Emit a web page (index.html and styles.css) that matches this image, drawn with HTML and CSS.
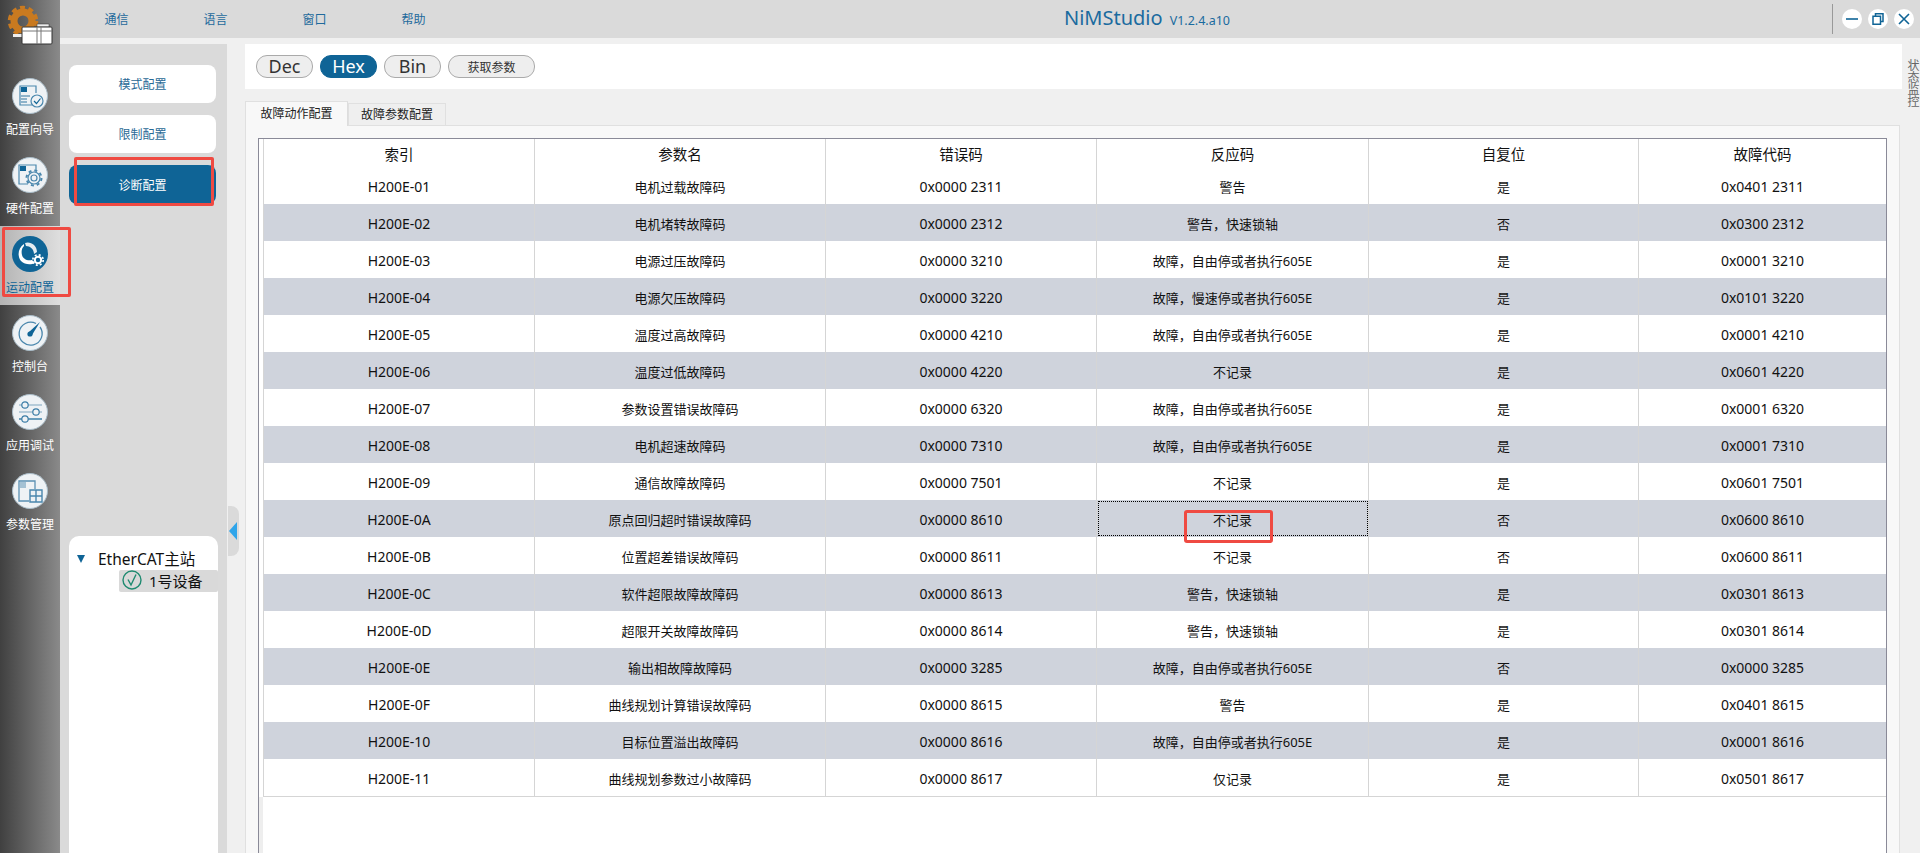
FILE: index.html
```html
<!DOCTYPE html>
<html>
<head>
    <title>NiMStudio</title>
    <link rel="stylesheet" href="styles.css">
</head>
<body>
    <nav class="rail">
        <div class="logo">
            <svg width="60" height="50" viewBox="0 0 60 50">
                <circle cx="23" cy="21" r="9" fill="none" stroke="#c97a20" stroke-width="7"/>
                <circle cx="23" cy="21" r="13.5" fill="none" stroke="#c97a20" stroke-width="3.5" stroke-dasharray="5 3.6"/>
                <rect x="13" y="34" width="9" height="3" fill="#eee"/>
                <rect x="37" y="24" width="12" height="3" fill="#eee" stroke="#333" stroke-width=".5"/>
                <rect x="22" y="27" width="30" height="17" rx="1" fill="#fff" stroke="#333"/>
                <path d="M22 31H52M37 27V44M41 27V44" stroke="#777" fill="none"/>
            </svg>
        </div>
        <a class="rail-item">
            <svg class="rail-icon" viewBox="0 0 36 36">
                <circle cx="18" cy="18" r="17.5" fill="#eef2f5" stroke="#a9bcc8"/>
                <path d="M20 27H8V8H24V15" fill="none" stroke="#4a87ad" stroke-width="1.2"/>
                <rect x="9" y="9" width="6" height="5" fill="#0f6496"/>
                <path d="M9 18H18M9 21H15M9 24H15" stroke="#2f74a0" stroke-width="1.2"/>
                <circle cx="25" cy="23" r="6" fill="#eef2f5" stroke="#4a87ad" stroke-width="1.2"/>
                <path d="M22 23L24.5 25.5L28.5 20.5" fill="none" stroke="#0f6496" stroke-width="1.2"/>
            </svg>
            <span>配置向导</span>
        </a>
        <a class="rail-item">
            <svg class="rail-icon" viewBox="0 0 36 36">
                <circle cx="18" cy="18" r="17.5" fill="#eef2f5" stroke="#a9bcc8"/>
                <path d="M16 27H7V8H24V13" fill="none" stroke="#4a87ad" stroke-width="1.2"/>
                <rect x="8" y="9" width="6" height="5" fill="#0f6496"/>
                <circle cx="22" cy="21" r="6" fill="#eef2f5" stroke="#4a87ad" stroke-width="1.2"/>
                <circle cx="22" cy="21" r="3" fill="none" stroke="#4a87ad" stroke-width="1.2"/>
                <circle cx="22" cy="21" r="7.5" fill="none" stroke="#4a87ad" stroke-width="2" stroke-dasharray="3 2.9"/>
            </svg>
            <span>硬件配置</span>
        </a>
        <a class="rail-item rail-active">
            <svg class="rail-icon" viewBox="0 0 36 36">
                <circle cx="18" cy="18" r="18" fill="#0f6496"/>
                <path d="M12 8C6 12 5 20 9 25C13 29 19 29 23 27L20 24C15 25 11 23 10 19C9 15 10 12 12 10Z" fill="#fff"/>
                <path d="M13 7C18 5 25 9 25 16L22 18C22 13 18 10 14 10Z" fill="#e4ecf1"/>
                <circle cx="26" cy="24" r="3.2" fill="none" stroke="#fff" stroke-width="2"/>
                <circle cx="26" cy="24" r="5.2" fill="none" stroke="#fff" stroke-width="1.6" stroke-dasharray="2 2.1"/>
            </svg>
            <span>运动配置</span>
        </a>
        <a class="rail-item">
            <svg class="rail-icon" viewBox="0 0 36 36">
                <circle cx="18" cy="18" r="17.5" fill="#eef2f5" stroke="#a9bcc8"/>
                <path d="M24 8.5A11.5 11.5 0 1 0 28 12" fill="none" stroke="#4a87ad" stroke-width="1.3"/>
                <path d="M17 17L28 7L20 20Z" fill="#0f6496"/>
                <circle cx="18" cy="19" r="2.6" fill="#0f6496"/>
            </svg>
            <span>控制台</span>
        </a>
        <a class="rail-item">
            <svg class="rail-icon" viewBox="0 0 36 36">
                <circle cx="18" cy="18" r="17.5" fill="#eef2f5" stroke="#a9bcc8"/>
                <path d="M7 11H30M7 18H30" stroke="#7fa6bf" stroke-width="1.2"/>
                <path d="M7 25H30" stroke="#0f6496" stroke-width="1.2"/>
                <circle cx="13" cy="11" r="3.2" fill="#eef2f5" stroke="#3b7da6" stroke-width="1.2"/>
                <circle cx="24" cy="18" r="3.2" fill="#eef2f5" stroke="#3b7da6" stroke-width="1.2"/>
                <circle cx="13" cy="25" r="3.2" fill="#eef2f5" stroke="#3b7da6" stroke-width="1.2"/>
            </svg>
            <span>应用调试</span>
        </a>
        <a class="rail-item">
            <svg class="rail-icon" viewBox="0 0 36 36">
                <circle cx="18" cy="18" r="17.5" fill="#eef2f5" stroke="#a9bcc8"/>
                <path d="M17 28H7V8H23V16" fill="none" stroke="#5b90b2" stroke-width="1.3"/>
                <path d="M8 10H14M8 12H14M8 14H14" stroke="#5b90b2"/>
                <path d="M18 17H30V29H18ZM24 17V29M18 23H30" fill="none" stroke="#4a87ad" stroke-width="1.4"/>
            </svg>
            <span>参数管理</span>
        </a>
    </nav>

    <div class="app">
        <header class="topbar">
            <ul class="menu">
                <li>通信</li>
                <li>语言</li>
                <li>窗口</li>
                <li>帮助</li>
            </ul>
            <div class="title">NiMStudio<small>V1.2.4.a10</small></div>
            <div class="controls">
                <button class="ctl">
                    <svg width="12" height="12" viewBox="0 0 12 12"><path d="M0 6H12" stroke="#0f6496" stroke-width="1.6"/></svg>
                </button>
                <button class="ctl">
                    <svg width="12" height="12" viewBox="0 0 12 12"><path d="M3.5 3V.8H11V8.5H8.5M1 3.2H8.5V11.2H1Z" fill="none" stroke="#0f6496" stroke-width="1.5"/></svg>
                </button>
                <button class="ctl">
                    <svg width="12" height="12" viewBox="0 0 12 12"><path d="M1 1L11 11M11 1L1 11" stroke="#0f6496" stroke-width="1.6"/></svg>
                </button>
            </div>
        </header>

        <div class="workspace">
            <aside class="side">
                <div class="side-nav">
                    <div class="side-card">模式配置</div>
                    <div class="side-card">限制配置</div>
                    <div class="side-card side-card-on">诊断配置</div>
                </div>
                <div class="tree">
                    <div class="tree-root"><i class="tree-arrow"></i>EtherCAT主站</div>
                    <div class="tree-node">
                        <svg width="20" height="20" viewBox="0 0 20 20">
                            <circle cx="10" cy="10" r="9" fill="none" stroke="#1f8a70" stroke-width="1.4"/>
                            <path d="M6 9.5L9 15L14 4.5" fill="none" stroke="#1f8a70" stroke-width="1.4"/>
                        </svg>
                        1号设备
                    </div>
                </div>
            </aside>

            <main class="main">
                <div class="handle"><i class="handle-arrow"></i></div>
                <div class="content">
                    <div class="toolbar">
                        <button class="radix">Dec</button>
                        <button class="radix radix-on">Hex</button>
                        <button class="radix">Bin</button>
                        <button class="fetch">获取参数</button>
                    </div>
                    <div class="tabs">
                        <div class="tab tab-on">故障动作配置</div>
                        <div class="tab">故障参数配置</div>
                    </div>
                    <div class="pane">
                        <div class="frame">
                            <div class="gutter"></div>
                            <table class="grid">
                                <colgroup>
                                    <col class="c1"><col class="c2"><col class="c3"><col class="c4"><col class="c5"><col class="c6">
                                </colgroup>
                                <thead>
                                    <tr><th>索引</th><th>参数名</th><th>错误码</th><th>反应码</th><th>自复位</th><th>故障代码</th></tr>
                                </thead>
                                <tbody>
                                    <tr><td>H200E-01</td><td>电机过载故障码</td><td>0x0000 2311</td><td>警告</td><td>是</td><td>0x0401 2311</td></tr>
                                    <tr><td>H200E-02</td><td>电机堵转故障码</td><td>0x0000 2312</td><td>警告，快速锁轴</td><td>否</td><td>0x0300 2312</td></tr>
                                    <tr><td>H200E-03</td><td>电源过压故障码</td><td>0x0000 3210</td><td>故障，自由停或者执行605E</td><td>是</td><td>0x0001 3210</td></tr>
                                    <tr><td>H200E-04</td><td>电源欠压故障码</td><td>0x0000 3220</td><td>故障，慢速停或者执行605E</td><td>是</td><td>0x0101 3220</td></tr>
                                    <tr><td>H200E-05</td><td>温度过高故障码</td><td>0x0000 4210</td><td>故障，自由停或者执行605E</td><td>是</td><td>0x0001 4210</td></tr>
                                    <tr><td>H200E-06</td><td>温度过低故障码</td><td>0x0000 4220</td><td>不记录</td><td>是</td><td>0x0601 4220</td></tr>
                                    <tr><td>H200E-07</td><td>参数设置错误故障码</td><td>0x0000 6320</td><td>故障，自由停或者执行605E</td><td>是</td><td>0x0001 6320</td></tr>
                                    <tr><td>H200E-08</td><td>电机超速故障码</td><td>0x0000 7310</td><td>故障，自由停或者执行605E</td><td>是</td><td>0x0001 7310</td></tr>
                                    <tr><td>H200E-09</td><td>通信故障故障码</td><td>0x0000 7501</td><td>不记录</td><td>是</td><td>0x0601 7501</td></tr>
                                    <tr><td>H200E-0A</td><td>原点回归超时错误故障码</td><td>0x0000 8610</td><td class="cell-focus">不记录</td><td>否</td><td>0x0600 8610</td></tr>
                                    <tr><td>H200E-0B</td><td>位置超差错误故障码</td><td>0x0000 8611</td><td>不记录</td><td>否</td><td>0x0600 8611</td></tr>
                                    <tr><td>H200E-0C</td><td>软件超限故障故障码</td><td>0x0000 8613</td><td>警告，快速锁轴</td><td>是</td><td>0x0301 8613</td></tr>
                                    <tr><td>H200E-0D</td><td>超限开关故障故障码</td><td>0x0000 8614</td><td>警告，快速锁轴</td><td>是</td><td>0x0301 8614</td></tr>
                                    <tr><td>H200E-0E</td><td>输出相故障故障码</td><td>0x0000 3285</td><td>故障，自由停或者执行605E</td><td>否</td><td>0x0000 3285</td></tr>
                                    <tr><td>H200E-0F</td><td>曲线规划计算错误故障码</td><td>0x0000 8615</td><td>警告</td><td>是</td><td>0x0401 8615</td></tr>
                                    <tr><td>H200E-10</td><td>目标位置溢出故障码</td><td>0x0000 8616</td><td>故障，自由停或者执行605E</td><td>是</td><td>0x0001 8616</td></tr>
                                    <tr><td>H200E-11</td><td>曲线规划参数过小故障码</td><td>0x0000 8617</td><td>仅记录</td><td>是</td><td>0x0501 8617</td></tr>
                                </tbody>
                            </table>
                        </div>
                    </div>
                </div>
                <div class="status-tab">状态监控</div>
            </main>
        </div>
    </div>

    <div class="mark mark-rail"></div>
    <div class="mark mark-side"></div>
    <div class="mark mark-cell"></div>
</body>
</html>
```

FILE: styles.css
```css
* { box-sizing: border-box; }
html, body { margin: 0; height: 100%; }
body { display: flex; width: 1920px; height: 853px; overflow: hidden; position: relative; font-family: "Noto Sans", "Noto Sans CJK SC", sans-serif; font-size: 12px; background-color: #efefef; color: #222; }
button { font-family: inherit; padding: 0; }

/* left rail */
.rail { width: 60px; flex: none; background: linear-gradient(to right, #404040, #8a8a8a); }
.logo { height: 68px; padding-top: 0; }
.logo svg { display: block; }
.rail-item { display: block; height: 79px; padding-top: 10px; text-align: center; color: #fff; line-height: 16px; }
.rail-icon { display: block; width: 36px; height: 36px; margin: 0 auto 8px; }
.rail-active { background: linear-gradient(to right, #b4b4b4, #dedede); color: #0f6496; }

.app { flex: 1; display: flex; flex-direction: column; min-width: 0; }

/* top bar */
.topbar { height: 38px; flex: none; display: flex; align-items: center; background-color: #dadada; padding-left: 7px; }
.menu { display: flex; list-style: none; margin: 0; padding: 0; color: #1f6a9c; }
.menu li { width: 99px; text-align: center; }
.title { margin-left: 601px; font-size: 20px; color: #1a6b9f; line-height: 38px; }
.title small { font-size: 12.5px; margin-left: 7px; }
.controls { margin-left: auto; display: flex; align-items: center; gap: 6px; height: 30px; border-left: 1px solid #999; padding: 0 6px 0 9px; }
.ctl { width: 20px; height: 20px; border: 0; border-radius: 50%; background-color: #fff; display: flex; align-items: center; justify-content: center; }

.workspace { flex: 1; display: flex; min-height: 0; padding-top: 6px; background-color: #f0f0f0; }

/* sidebar */
.side { width: 167px; flex: none; display: flex; flex-direction: column; justify-content: space-between; background-color: #dadada; padding: 21px 9px 0; }
.side-nav { display: flex; flex-direction: column; gap: 12px; }
.side-card { width: 147px; height: 38px; border-radius: 8px; background-color: #fff; color: #2a6a96; display: flex; align-items: center; justify-content: center; }
.side-card-on { height: 39px; background-color: #0f6496; color: #fff; }
.tree { height: 317px; background-color: #fff; border-radius: 10px 10px 0 0; padding-top: 12px; font-size: 15.5px; color: #111; }
.tree-root { height: 22px; line-height: 22px; padding-left: 29px; position: relative; }
.tree-arrow { position: absolute; left: 8px; top: 7px; border-style: solid; border-width: 8px 4.5px 0; border-color: #0f6496 transparent transparent; }
.tree-node { height: 22px; margin-left: 50px; background-color: #d9d9d9; border-radius: 2px; display: flex; align-items: center; gap: 7px; padding: 0 0 2px 3px; font-size: 15px; }

/* main */
.main { flex: 1; display: flex; position: relative; min-width: 0; }
.handle { position: absolute; left: 1px; top: 462px; width: 11px; height: 50px; background-color: #dadada; border-radius: 0 8px 8px 0; }
.handle-arrow { position: absolute; left: 1px; top: 16px; border-style: solid; border-width: 9px 8px 9px 0; border-color: transparent #2fa5ea transparent transparent; }
.content { width: 1675px; padding-left: 18px; display: flex; flex-direction: column; }
.status-tab { width: 18px; padding: 15px 2px 0 0; writing-mode: vertical-rl; color: #666; line-height: 12px; white-space: nowrap; }

.toolbar { height: 45px; flex: none; background-color: #fff; display: flex; align-items: center; gap: 7px; padding-left: 11px; }
.radix, .fetch { height: 23px; border: 1px solid #aaa; border-radius: 11px; background-color: #eee; color: #333; }
.radix { width: 57px; font-size: 18px; line-height: 19px; }
.radix-on { background-color: #0f6496; border-color: #0f6496; color: #fff; }
.fetch { width: 87px; font-size: 12px; }

.tabs { display: flex; align-items: flex-end; height: 24px; margin-top: 12px; flex: none; }
.tab { height: 22px; width: 98px; background-color: #efefef; border: 1px solid #e0e0e0; border-bottom: 0; line-height: 22px; text-align: center; color: #222; }
.tab-on { height: 25px; width: 103px; background-color: #f8f8f8; line-height: 24px; margin-bottom: -1px; position: relative; z-index: 1; border-right: 1px solid #ddd; }

.pane { flex: 1; width: 1655px; background-color: #f8f8f8; border: 1px solid #e0e0e0; border-bottom: 0; padding: 12px 0 0 12px; min-height: 0; }
.frame { width: 1629px; height: 100%; display: flex; background-color: #fff; border: solid #8a8a98; border-width: 1px 1px 0; }
.gutter { width: 4px; flex: none; background: linear-gradient(#fff 658px, #eee 658px); }

/* table */
.grid { width: 1623px; height: 658px; flex: none; table-layout: fixed; border-collapse: separate; border-spacing: 0; border-bottom: 1px solid #d5d5d5; border-left: 1px solid #d5d5d5; color: #111; }
.c1 { width: 271px; } .c2 { width: 291px; } .c3 { width: 271px; } .c4 { width: 272px; } .c5 { width: 270px; } .c6 { width: 247px; }
.grid th { height: 28px; padding: 1px 0 0; font-size: 14.5px; font-weight: 400; border-right: 1px solid #d5d5d5; }
.grid td { height: 37px; padding: 1px 0 0; font-size: 13px; text-align: center; border-right: 1px solid #d5d5d5; }
.grid td:nth-child(1), .grid td:nth-child(3), .grid td:nth-child(6) { font-size: 14px; }
.grid th:last-child, .grid td:last-child { border-right: 0; }
.grid tbody tr:nth-child(even) td { background-color: #cfd3dc; }
.cell-focus { outline: 1px dotted #000; outline-offset: -2px; }

/* red annotations drawn over the screenshot */
.mark { position: absolute; border: 3px solid #ef4a42; border-radius: 2px; }
.mark-rail { left: 2px; top: 227px; width: 69px; height: 70px; }
.mark-side { left: 74px; top: 157px; width: 140px; height: 49px; }
.mark-cell { left: 1184px; top: 510px; width: 89px; height: 33px; border-radius: 3px; }
```
